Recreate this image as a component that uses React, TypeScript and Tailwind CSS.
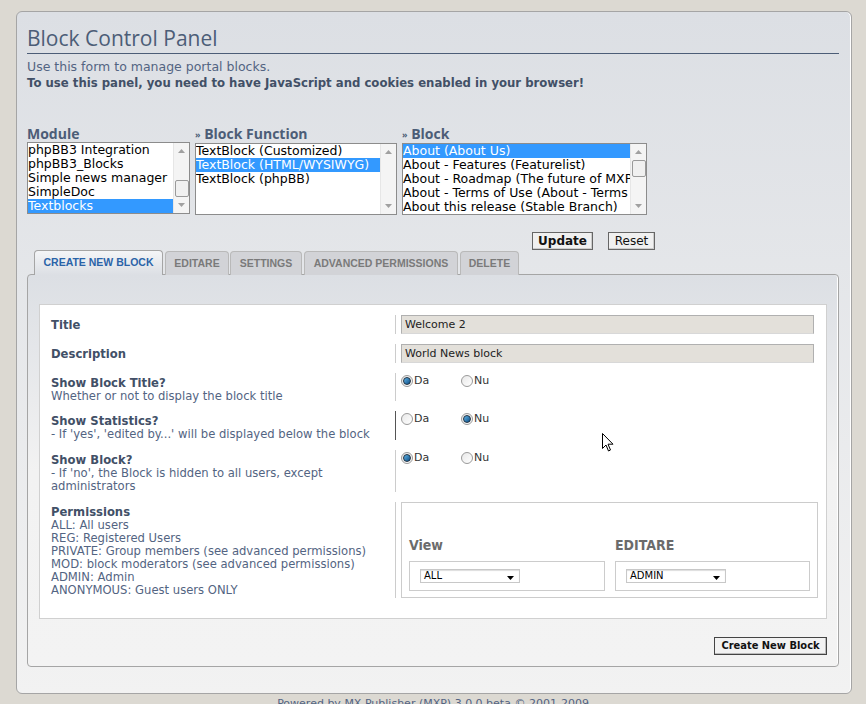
import React from "react";

const V = { fontFamily: '"DejaVu Sans", Verdana, sans-serif' };
const VC = { fontFamily: '"DejaVu Sans Condensed", "DejaVu Sans", sans-serif' };
const A = { fontFamily: '"Liberation Sans", Arial, sans-serif' };
const T = { fontFamily: '"Open Sans", "DejaVu Sans", sans-serif' };

function Scrollbar({ thumbTop }: { thumbTop?: number }) {
  return (
    <div className="relative w-[16px] h-full bg-[#f4f4f4] border-l border-[#e6e6e6] flex flex-col justify-between items-center shrink-0">
      <div className="h-[16px] flex items-center justify-center">
        <svg width="7" height="4" viewBox="0 0 7 4"><path d="M0 4 L3.5 0 L7 4 Z" fill="#a0a0a0" /></svg>
      </div>
      {thumbTop !== undefined && (
        <div
          className="absolute left-[1px] w-[14px] h-[17px] bg-[#f0f0f0] border border-[#9a9a9a] rounded-[2px]"
          style={{ top: thumbTop }}
        />
      )}
      <div className="h-[16px] flex items-center justify-center">
        <svg width="7" height="4" viewBox="0 0 7 4"><path d="M0 0 L3.5 4 L7 0 Z" fill="#a0a0a0" /></svg>
      </div>
    </div>
  );
}

function ListBox({ items, selected, width, thumbTop }: { items: string[]; selected: number; width: number; thumbTop?: number }) {
  return (
    <div className="h-[72px] border border-[#8c8c8c] bg-white flex" style={{ width }}>
      <div className="flex-1 overflow-hidden">
        {items.map((it, i) => (
          <div
            key={i}
            className={`h-[14px] leading-[14px] text-[12.5px] whitespace-nowrap overflow-hidden ${i === selected ? "bg-[#3399ff] text-white" : "text-black"}`}
            style={V}
          >
            {it}
          </div>
        ))}
      </div>
      <Scrollbar thumbTop={thumbTop} />
    </div>
  );
}

function Radio({ checked }: { checked: boolean }) {
  return (
    <span className="inline-flex w-[12px] h-[12px] rounded-full border border-[#9a9a9a] bg-gradient-to-br from-[#e8e8e8] to-[#ffffff] items-center justify-center">
      {checked && <span className="w-[8px] h-[8px] rounded-full bg-gradient-to-br from-[#5fb4e8] to-[#0b4f86] border border-[#203040]" />}
    </span>
  );
}

function RadioGroup({ yes }: { yes: boolean }) {
  return (
    <div className="flex items-center pt-[1px] text-[11px] text-[#333]" style={V}>
      <label className="flex items-center w-[60px]">
        <Radio checked={yes} />
        <span className="ml-[1px] leading-[13px]">Da</span>
      </label>
      <label className="flex items-center">
        <Radio checked={!yes} />
        <span className="ml-[1px] leading-[13px]">Nu</span>
      </label>
    </div>
  );
}

function Row({ left, right, h, dark }: { left: React.ReactNode; right: React.ReactNode; h: number; dark?: boolean }) {
  return (
    <div className="flex" style={{ height: h }}>
      <div className="w-[344px] shrink-0 pt-[4px] text-[11.6px] leading-[13px] text-[#536482]" style={V}>
        {left}
      </div>
      <div className={`flex-1 min-w-0 border-l pl-[5px] ${dark ? "border-[#555]" : "border-[#ccc]"}`}>{right}</div>
    </div>
  );
}

function SmallSelect({ value }: { value: string }) {
  return (
    <div className="w-[100px] h-[14px] border border-[#c8c8c8] bg-white flex items-center justify-between pl-[3px] pr-[5px] shadow-[inset_0_1px_1px_#ddd]">
      <span className="text-[10px] leading-[12px] text-black" style={V}>{value}</span>
      <svg width="7" height="4" viewBox="0 0 7 4" className="mt-[3px]"><path d="M0 0 L3.5 4 L7 0 Z" fill="#000" /></svg>
    </div>
  );
}

export default function App() {
  return (
    <div className="w-[866px] h-[704px] overflow-hidden bg-[#dcd9d2] pt-[11px] relative" style={V}>
      <div className="ml-[16px] w-[836px] h-[683px] rounded-[6px] border border-[#a5a5a5] shadow-[inset_-1px_0_0_#ffffff] bg-gradient-to-b from-[#dcdfe4] to-[#f2f2f2] pl-[10px] pr-[12px] pt-[12px]">
        <h1 className="text-[21px] leading-[28px] text-[#4c5d77] border-b border-[#4c5d77] pb-[1px]" style={T}>
          Block Control Panel
        </h1>
        <p className="mt-[5px] text-[12.5px] leading-[16px] text-[#536482]">Use this form to manage portal blocks.</p>
        <p className="text-[11.7px] leading-[16px] font-bold text-[#425067]">
          To use this panel, you need to have JavaScript and cookies enabled in your browser!
        </p>

        <div className="mt-[35px] flex gap-[5px]">
          <div>
            <div className="text-[14px] leading-[16px] font-bold text-[#4c5d77]" style={T}>Module</div>
            <ListBox
              width={163}
              selected={4}
              thumbTop={37}
              items={["phpBB3 Integration", "phpBB3_Blocks", "Simple news manager", "SimpleDoc", "Textblocks"]}
            />
          </div>
          <div>
            <div className="text-[14px] leading-[16px] font-bold text-[#4c5d77]" style={T}>
              <span className="text-[9px] align-middle">»</span> Block Function
            </div>
            <ListBox
              width={202}
              selected={1}
              items={["TextBlock (Customized)", "TextBlock (HTML/WYSIWYG)", "TextBlock (phpBB)"]}
            />
          </div>
          <div>
            <div className="text-[14px] leading-[16px] font-bold text-[#4c5d77]" style={T}>
              <span className="text-[9px] align-middle">»</span> Block
            </div>
            <ListBox
              width={245}
              selected={0}
              thumbTop={16}
              items={[
                "About (About Us)",
                "About - Features (Featurelist)",
                "About - Roadmap (The future of MXP)",
                "About - Terms of Use (About - Terms of Use)",
                "About this release (Stable Branch)",
              ]}
            />
          </div>
        </div>

        <div className="mt-[17px] flex pl-[505px] gap-[15px] h-[18px]">
          <button className="h-[18px] w-[61px] border border-[#666] bg-[#f0f0f0] text-[12px] leading-[14px] font-bold text-[#111] shadow-[inset_-1px_-1px_0_#ccc]">
            Update
          </button>
          <button className="h-[18px] w-[47px] border border-[#666] bg-[#f0f0f0] text-[12px] leading-[14px] text-[#111] shadow-[inset_-1px_-1px_0_#ccc]">
            Reset
          </button>
        </div>

        <div className="flex items-end pl-[7px] h-[25px] relative z-10" style={A}>
          <div className="h-[25px] w-[129px] rounded-t-[4px] border border-b-0 border-[#a5a5a5] bg-gradient-to-b from-[#f4f5f7] to-[#dcdfe4] flex items-center justify-center text-[10.5px] font-bold text-[#2a63a8]">
            CREATE NEW BLOCK
          </div>
          <div className="ml-[2px] h-[24px] w-[64px] rounded-t-[4px] border border-b-0 border-[#b9b9b9] bg-[#d2d3d7] flex items-center justify-center text-[10.5px] font-bold text-[#7a7a7a]">
            EDITARE
          </div>
          <div className="ml-[1px] h-[24px] w-[72px] rounded-t-[4px] border border-b-0 border-[#b9b9b9] bg-[#d2d3d7] flex items-center justify-center text-[10.5px] font-bold text-[#7a7a7a]">
            SETTINGS
          </div>
          <div className="ml-[2px] h-[24px] w-[154px] rounded-t-[4px] border border-b-0 border-[#b9b9b9] bg-[#d2d3d7] flex items-center justify-center text-[10.5px] font-bold text-[#7a7a7a]">
            ADVANCED PERMISSIONS
          </div>
          <div className="ml-[2px] h-[24px] w-[59px] rounded-t-[4px] border border-b-0 border-[#b9b9b9] bg-[#d2d3d7] flex items-center justify-center text-[10.5px] font-bold text-[#7a7a7a]">
            DELETE
          </div>
        </div>

        <div className="-mt-[1px] h-[393px] rounded-[4px] border border-[#a5a5a5] shadow-[inset_-1px_0_0_#ffffff] bg-gradient-to-b from-[#dcdfe4] via-[#f2f2f2] to-[#f3f3f3] px-[11px] pt-[29px]">
          <div className="bg-white border border-[#d0d0d0] pl-[11px] pr-[12px] pt-[10px] pb-[20px] flex flex-col gap-[10px]">
            <Row
              h={19}
              left={<b className="text-[#425067]">Title</b>}
              right={
                <div className="h-[19px] border border-[#b0b0b0] border-b-[#d8d8d8] bg-[#e3e0da] text-[11px] leading-[17px] pl-[3px] text-[#222]">Welcome 2</div>
              }
            />
            <Row
              h={19}
              left={<b className="text-[#425067]">Description</b>}
              right={
                <div className="h-[19px] border border-[#b0b0b0] border-b-[#d8d8d8] bg-[#e3e0da] text-[11px] leading-[17px] pl-[3px] text-[#222]">World News block</div>
              }
            />
            <Row
              h={28}
              left={
                <>
                  <b className="text-[#425067]">Show Block Title?</b>
                  <br />
                  Whether or not to display the block title
                </>
              }
              right={<RadioGroup yes={true} />}
            />
            <Row
              h={29}
              dark
              left={
                <>
                  <b className="text-[#425067]">Show Statistics?</b>
                  <br />- If 'yes', 'edited by...' will be displayed below the block
                </>
              }
              right={<RadioGroup yes={false} />}
            />
            <Row
              h={42}
              left={
                <>
                  <b className="text-[#425067]">Show Block?</b>
                  <br />- If 'no', the Block is hidden to all users, except
                  <br />
                  administrators
                </>
              }
              right={<RadioGroup yes={true} />}
            />
            <Row
              h={96}
              left={
                <>
                  <b className="text-[#425067]">Permissions</b>
                  <br />
                  ALL: All users
                  <br />
                  REG: Registered Users
                  <br />
                  PRIVATE: Group members (see advanced permissions)
                  <br />
                  MOD: block moderators (see advanced permissions)
                  <br />
                  ADMIN: Admin
                  <br />
                  ANONYMOUS: Guest users ONLY
                </>
              }
              right={
                <div className="h-[96px] w-[417px] border border-[#cccccc] pl-[7px] pt-[33px] flex gap-[10px]">
                  <div>
                    <div className="h-[18px] text-[14px] leading-[18px] text-[#6b6b6b] font-semibold" style={VC}>View</div>
                    <div className="mt-[7px] w-[196px] h-[30px] border border-[#cccccc] pl-[10px] pt-[7px]">
                      <SmallSelect value="ALL" />
                    </div>
                  </div>
                  <div>
                    <div className="h-[18px] text-[14px] leading-[18px] text-[#6b6b6b] font-semibold" style={VC}>EDITARE</div>
                    <div className="mt-[7px] w-[195px] h-[30px] border border-[#cccccc] pl-[10px] pt-[7px]">
                      <SmallSelect value="ADMIN" />
                    </div>
                  </div>
                </div>
              }
            />
          </div>
          <div className="flex justify-end mt-[18px]">
            <button
              className="h-[18px] w-[113px] border border-[#444] bg-[#f2f2f2] text-[11px] leading-[14px] font-bold text-[#111] shadow-[inset_-1px_-1px_0_#bbb]"
              style={VC}
            >
              Create New Block
            </button>
          </div>
        </div>
      </div>
      <div className="mt-[3px] text-center text-[11px] leading-[13px] text-[#536482]">
        Powered by MX Publisher (MXP) 3.0.0 beta © 2001-2009
      </div>

      <svg className="absolute left-[602px] top-[433px]" width="12" height="19" viewBox="0 0 12 19">
        <path d="M0.5 0.5 L0.5 15.5 L4 12 L6.5 18 L8.5 17 L6 11.2 L11 11.2 Z" fill="#fff" stroke="#000" strokeWidth="1" />
      </svg>
    </div>
  );
}
